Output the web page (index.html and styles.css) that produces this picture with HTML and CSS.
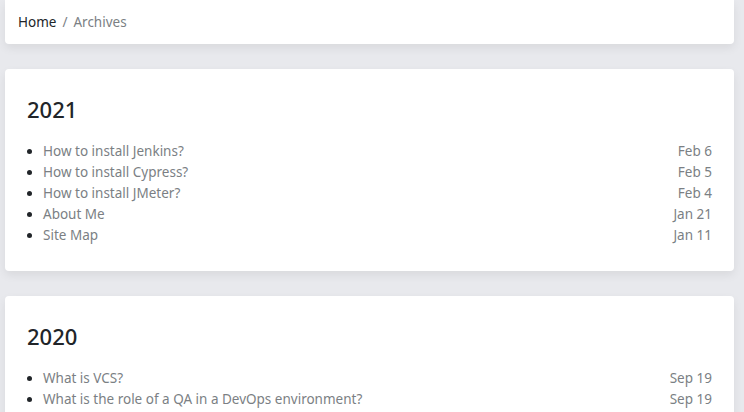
FILE: index.html
```html
<!DOCTYPE html>
<html lang="en">
<head>
<meta charset="utf-8">
<title>Archives</title>
<link rel="stylesheet" href="styles.css">
</head>
<body>
<div class="page">
  <nav class="card crumbs">
    <a class="crumb-home" href="#">Home</a>
    <span class="sep">/</span>
    <span class="crumb-current">Archives</span>
  </nav>

  <section class="card year">
    <h2 class="year-title">2021</h2>
    <ul class="posts">
      <li class="post"><a class="post-link" href="#">How to install Jenkins?</a><span class="post-date">Feb 6</span></li>
      <li class="post"><a class="post-link" href="#">How to install Cypress?</a><span class="post-date">Feb 5</span></li>
      <li class="post"><a class="post-link" href="#">How to install JMeter?</a><span class="post-date">Feb 4</span></li>
      <li class="post"><a class="post-link" href="#">About Me</a><span class="post-date">Jan 21</span></li>
      <li class="post"><a class="post-link" href="#">Site Map</a><span class="post-date">Jan 11</span></li>
    </ul>
  </section>

  <section class="card year">
    <h2 class="year-title">2020</h2>
    <ul class="posts">
      <li class="post"><a class="post-link" href="#">What is VCS?</a><span class="post-date">Sep 19</span></li>
      <li class="post"><a class="post-link" href="#">What is the role of a QA in a DevOps environment?</a><span class="post-date">Sep 19</span></li>
    </ul>
  </section>
</div>
</body>
</html>
```

FILE: styles.css
```css
* { box-sizing: border-box; }
html, body { margin: 0; padding: 0; }
body {
  background: #e8e9ed;
  font-family: "Noto Sans", "Open Sans", sans-serif;
  color: #212529;
  overflow: hidden;
}
.page {
  padding: 0 10px 0 5px;
  display: flex;
  flex-direction: column;
  gap: 25px;
}
.card {
  background: #fff;
  border-radius: 4px;
  box-shadow: 0 4px 10px rgba(0, 0, 0, 0.07);
}
.crumbs {
  height: 44px;
  padding: 0 13px;
  display: flex;
  align-items: center;
  gap: 6px;
  font-size: 13.5px;
  line-height: 20px;
  border-top-left-radius: 0;
  border-top-right-radius: 0;
}
.crumb-home { color: #212529; text-decoration: none; }
.sep, .crumb-current { color: #7b7f84; }
.year {
  padding: 24px 22px 25px 22px;
}
.year-title {
  margin: 0 0 16px 0;
  font-size: 22px;
  font-weight: 500;
  line-height: 32px;
  color: #212529;
}
.posts {
  margin: 0;
  padding: 0 0 0 16px;
  font-size: 13.5px;
  line-height: 21px;
}
.post {
  display: list-item;
}
.post-link {
  color: #7b7f84;
  text-decoration: none;
}
.post-date {
  float: right;
  color: #7b7f84;
}
```
